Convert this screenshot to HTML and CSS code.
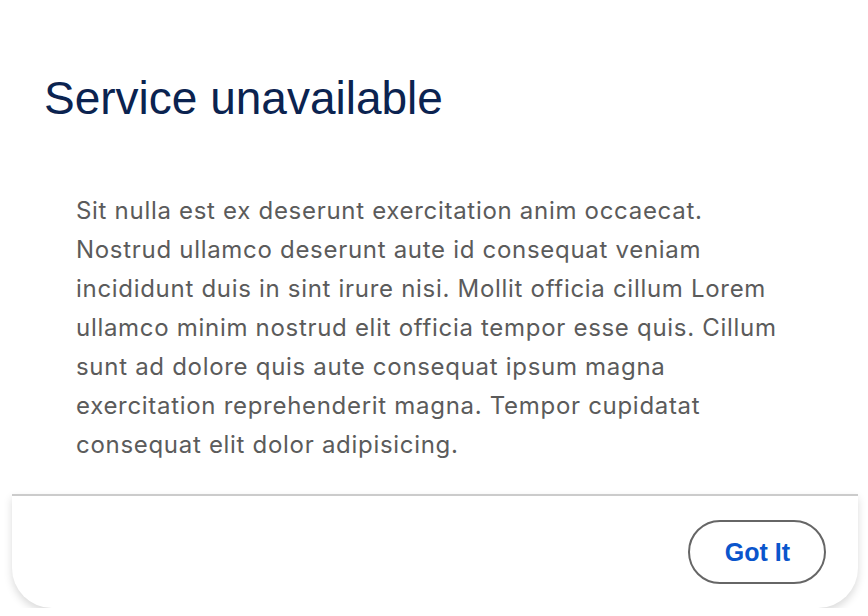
FILE: index.html
```html
<!DOCTYPE html>
<html lang="en">
<head>
  <meta charset="UTF-8" />
  <meta name="viewport" content="width=device-width, initial-scale=1.0"/>
  <title>Service unavailable</title>
  <link rel="stylesheet" href="styles.css">
</head>
<body>
  <div class="dialog">
    <header class="dialog-header">
      <h1>Service unavailable</h1>
    </header>
    <section class="dialog-body">
      <p>Sit nulla est ex deserunt exercitation anim occaecat. Nostrud ullamco deserunt aute id consequat veniam incididunt duis in sint irure nisi. Mollit officia cillum Lorem ullamco minim nostrud elit officia tempor esse quis. Cillum sunt ad dolore quis aute consequat ipsum magna exercitation reprehenderit magna. Tempor cupidatat consequat elit dolor adipisicing.</p>
    </section>
    <footer class="dialog-footer">
      <button class="btn-got-it">Got It</button>
    </footer>
  </div>
</body>
</html>
```

FILE: styles.css
```css
body {
  margin: 0;
  background-color: #ffffff;
  font-family: Inter, 'Noto Sans', sans-serif;
}

.dialog {
  margin: 0 10px 0 12px;
  padding-top: 70px;
}

.dialog-header {
  padding: 0 32px;
}

.dialog-header h1 {
  margin: 0;
  font-family: 'Liberation Sans', Arial, sans-serif;
  font-weight: 400;
  font-size: 46px;
  line-height: 56px;
  color: #0b2350;
}

.dialog-body {
  padding: 65px 64px 30px;
}

.dialog-body p {
  margin: 0;
  width: 712px;
  font-size: 24px;
  line-height: 39px;
  letter-spacing: 0.7px;
  color: #5b5b5b;
}

.dialog-footer {
  display: flex;
  justify-content: flex-end;
  padding: 24px 32px;
  border-top: 2px solid #cbcbcb;
  border-radius: 0 0 40px 40px;
  box-shadow: 0 4px 8px rgba(0, 0, 0, 0.15);
}

.btn-got-it {
  height: 64px;
  padding: 0 34px 0 35px;
  background: #ffffff;
  border: 2px solid #666666;
  border-radius: 32px;
  font-family: 'Liberation Sans', Arial, sans-serif;
  font-weight: 700;
  font-size: 25px;
  color: #0a55cc;
  cursor: pointer;
}
```
